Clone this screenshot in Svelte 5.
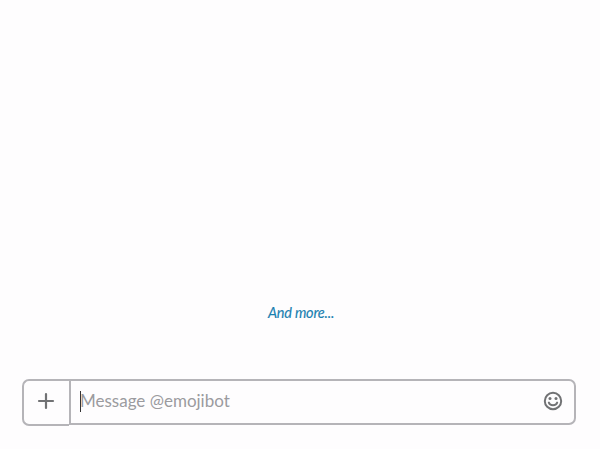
<script>
  let message = $state('');
</script>

<main>
  <div class="history"><em>And more...</em></div>
  <div class="composer">
    <button class="add" aria-label="Add">
      <svg width="18" height="18" viewBox="0 0 18 18"><path d="M9 2v14M2 9h14" /></svg>
    </button>
    <div class="field">
      <span class="caret"></span>
      <span class="placeholder">{message || 'Message @emojibot'}</span>
      <svg class="smile" width="20" height="20" viewBox="0 0 20 20">
        <circle cx="10" cy="10" r="8.2" />
        <path d="M5.8 11.6c1 3.6 7.4 3.6 8.4 0" />
        <circle class="eye" cx="7" cy="7.6" r="1.5" />
        <circle class="eye" cx="13" cy="7.6" r="1.5" />
      </svg>
    </div>
  </div>
</main>

<style>
  :global(body) { margin: 0; background: #fefdfe; }
  main {
    box-sizing: border-box;
    height: 449px;
    display: flex;
    flex-direction: column;
    padding: 0 24.5px 23px 21.5px;
    font-family: Lato, sans-serif;
  }
  .history {
    flex: 1;
    display: flex;
    align-items: flex-end;
    justify-content: center;
    padding: 0 0 57px 5px;
    color: #1980b0;
    font-size: 14.5px;
    line-height: 18px;
    letter-spacing: -0.22px;
    -webkit-text-stroke: 0.12px #1980b0;
  }
  .composer { display: flex; height: 47px; }
  .add {
    box-sizing: border-box;
    width: 47.5px;
    padding: 0 0 3px;
    border: 2px solid #b5b4b8;
    border-right: 0;
    border-radius: 7px 0 0 7px;
    background: #fefdfe;
    display: flex;
    align-items: center;
    justify-content: center;
  }
  svg { fill: none; stroke: #717274; stroke-width: 2; stroke-linecap: round; }
  .add svg { stroke-width: 2.2; }
  .field {
    flex: 1;
    box-sizing: border-box;
    height: 46px;
    border: 2px solid #b5b4b8;
    border-radius: 0 7px 7px 0;
    display: flex;
    align-items: center;
    padding: 0 10.5px 2px 9px;
  }
  .caret { width: 1px; height: 21px; background: #333; margin-right: -1px; }
  .placeholder { flex: 1; color: #9b9b9f; font-size: 17px; line-height: 24px; }
  .eye { fill: #717274; stroke: none; }
</style>
